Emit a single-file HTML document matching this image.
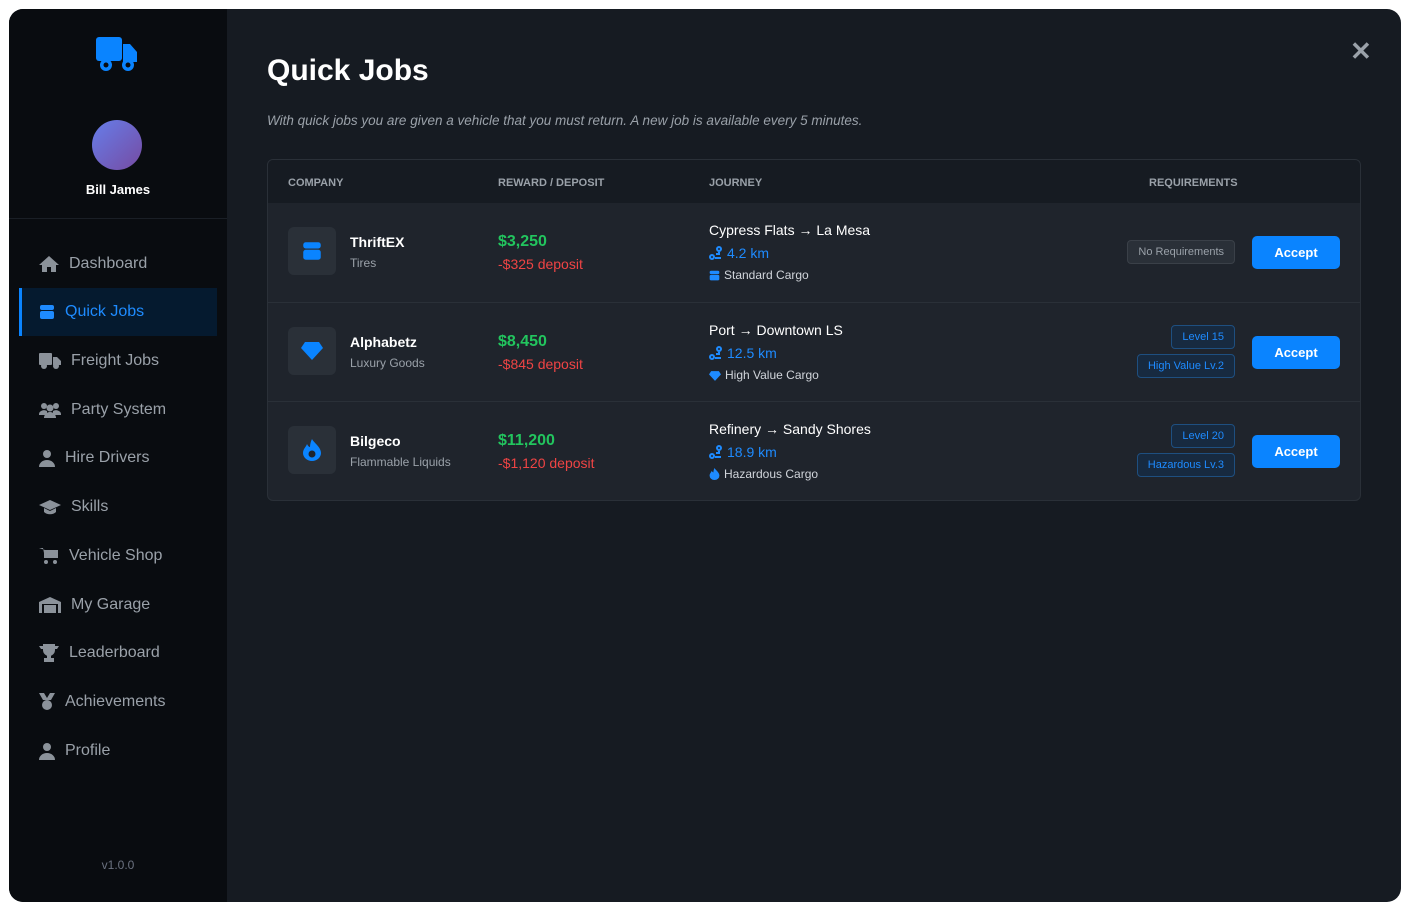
<!DOCTYPE html>
<html><head><meta charset="utf-8"><style>
*{box-sizing:border-box;margin:0;padding:0}
body{width:1412px;height:913px;background:#fff;font-family:"Liberation Sans",sans-serif;position:relative;overflow:hidden}
.app{position:absolute;left:9px;top:9px;width:1392px;height:893px;border-radius:14px;overflow:hidden;background:#161b22}
.side{position:absolute;left:0;top:0;width:218px;height:100%;background:#090c10}
.sep{position:absolute;left:0;top:209px;width:218px;height:1px;background:#1a1f26}
.av{position:absolute;left:83px;top:111px;width:50px;height:50px;border-radius:50%;background:linear-gradient(135deg,#667eea,#764ba2)}
.name{position:absolute;left:0;width:218px;top:173px;text-align:center;color:#fff;font-weight:bold;font-size:13px}
.nav{position:absolute;left:10px;width:198px;height:48px;display:flex;align-items:center;color:#9aa1a9;font-size:16px}
.nav svg{margin:0 10px 0 20px;fill:#8b929a}
.nav.act{background:#051a2f;border-left:3px solid #0a84ff;color:#1e8bff}
.nav.act svg{fill:#1e8bff;margin-left:17px}
.ver{position:absolute;left:0;width:218px;top:849px;text-align:center;color:#6b7280;font-size:12px}
h1{position:absolute;left:258px;top:45px;color:#fff;font-size:30px;font-weight:bold}
.sub{position:absolute;left:258px;top:104px;color:#9aa1a9;font-size:13.5px;font-style:italic}
.close{position:absolute;left:1341px;top:27px;color:#9aa1a9;font-size:26px;font-weight:bold}
.tbl{position:absolute;left:258px;top:150px;width:1094px;height:342px;border:1px solid #2a3038;border-radius:6px;overflow:hidden;background:#1f242c}
.th{height:43px;background:#161b22;position:relative;color:#9aa1a9;font-size:11px;font-weight:bold}
.th span{position:absolute;top:17px}
.row{position:absolute;left:0;width:100%;height:99px;border-top:1px solid #2a3038}
.ic{position:absolute;left:20px;top:24px;width:48px;height:48px;background:#2a3038;border-radius:6px;display:flex;align-items:center;justify-content:center}
.co{position:absolute;left:82px;top:31px;color:#fff;font-weight:bold;font-size:14px}
.cs{position:absolute;left:82px;top:53px;color:#9aa1a9;font-size:12px}
.rw{position:absolute;left:230px;top:30px;color:#22c55e;font-weight:bold;font-size:16px}
.dp{position:absolute;left:230px;top:53px;color:#ef4444;font-size:14px}
.jr{position:absolute;left:441px;top:19px;color:#fff;font-size:14px}
.km{position:absolute;left:441px;top:42px;color:#1e8bff;font-size:14px}
.cg{position:absolute;left:441px;top:65px;color:#d1d5db;font-size:12px}
.cg svg,.km svg{vertical-align:-2px;margin-right:4px}
.tag{position:absolute;right:125px;height:24px;border:1px solid #1e4f80;background:#172a40;color:#1e8bff;font-size:11px;border-radius:4px;padding:0 10px;line-height:22px}
.tag.n{border-color:#3a4048;background:#2a3038;color:#9aa1a9}
.acc{position:absolute;left:984px;top:33px;width:88px;height:33px;background:#0a84ff;border-radius:5px;color:#fff;font-weight:bold;font-size:13px;text-align:center;line-height:33px}
</style></head><body><div class="app">
<div class="side">
<svg style="position:absolute;left:87px;top:28px" width="42" height="36" viewBox="0 0 42 36"><rect x="0" y="0" width="26" height="24" rx="3" fill="#0a84ff"/><path d="M27 7h7l7 8v10H27z" fill="#0a84ff"/><circle cx="10" cy="28" r="6" fill="#0a84ff"/><circle cx="32" cy="28" r="6" fill="#0a84ff"/><circle cx="10" cy="28" r="2.5" fill="#090c10"/><circle cx="32" cy="28" r="2.5" fill="#090c10"/></svg>
<div class="av"></div><div class="name">Bill James</div><div class="sep"></div>
<div class="nav" style="top:231px"><svg width="20" height="16" viewBox="0 0 20 16"><path d="M10 0L0 9h3v7h5v-5h4v5h5V9h3z"/></svg>Dashboard</div>
<div class="nav act" style="top:279px"><svg width="16" height="16" viewBox="0 0 16 16"><rect x="1" y="1" width="14" height="5" rx="2"/><rect x="1" y="7" width="14" height="8" rx="2"/></svg>Quick Jobs</div>
<div class="nav" style="top:328px"><svg width="22" height="16" viewBox="0 0 22 16"><rect x="0" y="0" width="13" height="12" rx="1"/><path d="M14 4h4l4 4v4h-8z"/><circle cx="5" cy="13" r="3"/><circle cx="17" cy="13" r="3"/></svg>Freight Jobs</div>
<div class="nav" style="top:377px"><svg width="22" height="16" viewBox="0 0 22 16"><circle cx="5" cy="4" r="3"/><circle cx="17" cy="4" r="3"/><circle cx="11" cy="6" r="3.5"/><path d="M0 12a5 4 0 0 1 8-3v4H0zM14 9a5 4 0 0 1 8 3v1h-8zM5 16a6 6 0 0 1 12 0z"/></svg>Party System</div>
<div class="nav" style="top:425px"><svg width="16" height="18" viewBox="0 0 16 18"><circle cx="8" cy="5" r="4"/><path d="M0 18a8 7 0 0 1 16 0z"/></svg>Hire Drivers</div>
<div class="nav" style="top:474px"><svg width="22" height="16" viewBox="0 0 22 16"><path d="M11 1L0 6l11 5 11-5zM5 9v4c3 3 9 3 12 0V9l-6 3z"/></svg>Skills</div>
<div class="nav" style="top:523px"><svg width="20" height="18" viewBox="0 0 20 18"><path d="M0 1h4l2 10h11l2-8H6" /><rect x="5" y="3" width="14" height="8"/><circle cx="7" cy="15" r="2"/><circle cx="16" cy="15" r="2"/></svg>Vehicle Shop</div>
<div class="nav" style="top:572px"><svg width="22" height="16" viewBox="0 0 22 16"><path d="M0 5L11 0l11 5v11h-3V7H3v9H0z"/><rect x="5" y="8" width="12" height="8"/></svg>My Garage</div>
<div class="nav" style="top:620px"><svg width="20" height="18" viewBox="0 0 20 18"><path d="M4 0h12v6a6 6 0 0 1-12 0zM0 2h4v3H2zM16 2h4l-2 3h-2zM8 11h4v3h3v4H5v-4h3z"/></svg>Leaderboard</div>
<div class="nav" style="top:669px"><svg width="16" height="18" viewBox="0 0 16 18"><path d="M0 0h5l3 5 3-5h5l-4 7H4z"/><circle cx="8" cy="12" r="5"/></svg>Achievements</div>
<div class="nav" style="top:718px"><svg width="16" height="18" viewBox="0 0 16 18"><circle cx="8" cy="5" r="4"/><path d="M0 18a8 7 0 0 1 16 0z"/></svg>Profile</div>
<div class="ver">v1.0.0</div>
</div>
<h1>Quick Jobs</h1>
<div class="sub">With quick jobs you are given a vehicle that you must return. A new job is available every 5 minutes.</div>
<div class="close">✕</div>
<div class="tbl">
<div class="th"><span style="left:20px">COMPANY</span><span style="left:230px">REWARD / DEPOSIT</span><span style="left:441px">JOURNEY</span><span style="left:881px">REQUIREMENTS</span></div>
<div class="row" style="top:43px;border-top:none">
<div class="ic"><svg width="20" height="20" viewBox="0 0 16 16" fill="#0a84ff"><rect x="1" y="1" width="14" height="5" rx="2"/><rect x="1" y="7" width="14" height="8" rx="2"/></svg></div>
<div class="co">ThriftEX</div><div class="cs">Tires</div>
<div class="rw">$3,250</div><div class="dp">-$325 deposit</div>
<div class="jr">Cypress Flats → La Mesa</div>
<div class="km"><svg width="14" height="14" viewBox="0 0 14 14" fill="none" stroke="#1e8bff" stroke-width="2"><circle cx="3" cy="11" r="2"/><circle cx="10" cy="3" r="2"/><path d="M6 12h6M10 6v2H7"/></svg>4.2 km</div>
<div class="cg"><svg width="11" height="11" viewBox="0 0 16 16" fill="#1e8bff"><rect x="1" y="1" width="14" height="5" rx="2"/><rect x="1" y="7" width="14" height="8" rx="2"/></svg>Standard Cargo</div>
<div class="tag n" style="top:37px">No Requirements</div><div class="acc">Accept</div>
</div>
<div class="row" style="top:142px">
<div class="ic"><svg width="22" height="18" viewBox="0 0 22 18" fill="#0a84ff"><path d="M4 0h14l4 6-11 12L0 6z"/></svg></div>
<div class="co">Alphabetz</div><div class="cs">Luxury Goods</div>
<div class="rw">$8,450</div><div class="dp">-$845 deposit</div>
<div class="jr">Port → Downtown LS</div>
<div class="km"><svg width="14" height="14" viewBox="0 0 14 14" fill="none" stroke="#1e8bff" stroke-width="2"><circle cx="3" cy="11" r="2"/><circle cx="10" cy="3" r="2"/><path d="M6 12h6M10 6v2H7"/></svg>12.5 km</div>
<div class="cg"><svg width="12" height="10" viewBox="0 0 22 18" fill="#1e8bff"><path d="M4 0h14l4 6-11 12L0 6z"/></svg>High Value Cargo</div>
<div class="tag" style="top:22px">Level 15</div><div class="tag" style="top:51px">High Value Lv.2</div><div class="acc">Accept</div>
</div>
<div class="row" style="top:241px">
<div class="ic"><svg width="18" height="22" viewBox="0 0 18 22"><path d="M9 0c2 4 9 8 9 14a9 8 0 0 1-18 0c0-4 3-6 4-9 1 2 2 3 3 3C7 5 8 2 9 0z" fill="#0a84ff"/><circle cx="9" cy="15" r="3.5" fill="#1f242c"/></svg></div>
<div class="co">Bilgeco</div><div class="cs">Flammable Liquids</div>
<div class="rw">$11,200</div><div class="dp">-$1,120 deposit</div>
<div class="jr">Refinery → Sandy Shores</div>
<div class="km"><svg width="14" height="14" viewBox="0 0 14 14" fill="none" stroke="#1e8bff" stroke-width="2"><circle cx="3" cy="11" r="2"/><circle cx="10" cy="3" r="2"/><path d="M6 12h6M10 6v2H7"/></svg>18.9 km</div>
<div class="cg"><svg width="11" height="12" viewBox="0 0 18 22" fill="#1e8bff"><path d="M9 0c2 4 9 8 9 14a9 8 0 0 1-18 0c0-4 3-6 4-9 1 2 2 3 3 3C7 5 8 2 9 0z"/></svg>Hazardous Cargo</div>
<div class="tag" style="top:22px">Level 20</div><div class="tag" style="top:51px">Hazardous Lv.3</div><div class="acc">Accept</div>
</div>
</div>
</div></body></html>
